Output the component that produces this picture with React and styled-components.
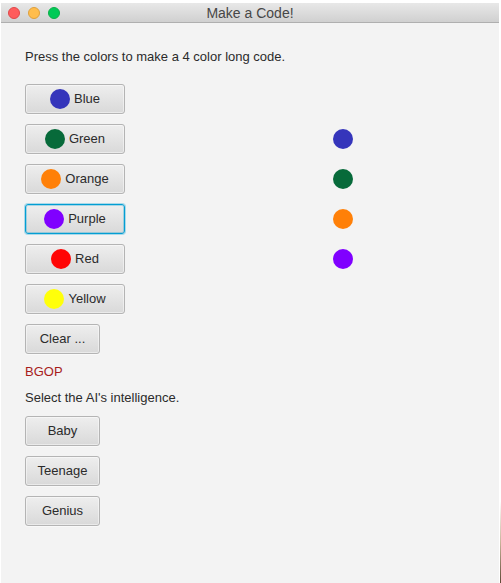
import React, { useState } from "react";
import styled, { createGlobalStyle, css } from "styled-components";

const GlobalStyle = createGlobalStyle`
  *, *::before, *::after { box-sizing: border-box; }
  body {
    margin: 0;
    background: #fff;
    font-family: "Liberation Sans", Arial, Helvetica, sans-serif;
    font-size: 13px;
    line-height: 16px;
    color: #2b2b2b;
  }
`;

const Desktop = styled.div`
  display: flex;
  min-height: 100vh;
  padding: 3px 2px 0 1px;
  background: linear-gradient(#fff 86%, #c9b49a 93%, #5e4a36) right / 1px 100% no-repeat #fff;
`;

const Window = styled.div`
  flex: 1;
  display: flex;
  flex-direction: column;
  background: #f3f3f3;
`;

const TitleBar = styled.header`
  display: grid;
  grid-template-columns: 1fr auto 1fr;
  align-items: center;
  height: 20px;
  padding: 0 7px;
  background: linear-gradient(#e8e8e8, #d0d0d0);
  border-bottom: 1px solid #afafaf;
`;

const Title = styled.h1`
  margin: 0;
  font-size: 14px;
  font-weight: 400;
  color: #474747;
`;

const WindowControls = styled.div`
  display: flex;
  gap: 8px;
`;

const WindowButton = styled.button`
  width: 12px;
  height: 12px;
  padding: 0;
  border: 1px solid ${(p) => p.$edge};
  border-radius: 50%;
  background: ${(p) => p.$fill};
`;

const Form = styled.main`
  display: flex;
  flex-direction: column;
  align-items: stretch;
  gap: 10px;
  padding: 26px 24px;
`;

const Label = styled.p`
  margin: 0;
`;

const CodeText = styled.output`
  color: #a81c1c;
`;

const Picker = styled.div`
  display: grid;
  grid-template-columns: 7fr 10fr;
  grid-auto-rows: 30px;
  row-gap: 10px;
  align-items: center;
  padding-top: 9px;
`;

const Button = styled.button`
  display: flex;
  align-items: center;
  justify-content: center;
  gap: 4px;
  width: ${(p) => (p.$wide ? 100 : 75)}px;
  height: 30px;
  padding: 0;
  border: 1px solid #b4b4b4;
  border-radius: 3px;
  background: linear-gradient(#eeeeee, #d9d9d9);
  box-shadow: inset 0 0 0 1px rgba(255, 255, 255, 0.45), 0 1px 0 #f9f9f9;
  font: inherit;
  color: inherit;
  outline: none;

  ${(p) =>
    p.$wide &&
    css`
      grid-column: 1;
      grid-row: ${p.$row};
    `}

  ${(p) =>
    p.$focused &&
    css`
      border-color: #039ed3;
      box-shadow: inset 0 0 0 1px rgba(3, 158, 211, 0.3), 0 0 0 1px rgba(3, 158, 211, 0.3);
    `}
`;

const Dot = styled.span`
  width: 20px;
  height: 20px;
  border-radius: 50%;
  background: ${(p) => p.$color};
`;

const Peg = styled(Dot)`
  grid-column: 2;
  grid-row: ${(p) => p.$row};
  justify-self: center;
`;

const COLORS = [
  { name: "Blue", value: "#3535bb" },
  { name: "Green", value: "#076a3a" },
  { name: "Orange", value: "#ff8008" },
  { name: "Purple", value: "#8000ff" },
  { name: "Red", value: "#ff0505" },
  { name: "Yellow", value: "#ffff0a" },
];

const LEVELS = ["Baby", "Teenage", "Genius"];
const CODE_LENGTH = 4;

export default function App() {
  const [code, setCode] = useState(COLORS.slice(0, CODE_LENGTH));
  const [focused, setFocused] = useState("Purple");

  const pick = (color) => {
    setFocused(color.name);
    if (code.length < CODE_LENGTH) setCode([...code, color]);
  };

  return (
    <Desktop>
      <GlobalStyle />
      <Window>
        <TitleBar>
          <WindowControls>
            <WindowButton aria-label="Close" $fill="#ff5c5c" $edge="#e0484a" />
            <WindowButton aria-label="Minimize" $fill="#ffbd4c" $edge="#dfa03c" />
            <WindowButton aria-label="Zoom" $fill="#00ca56" $edge="#0cae48" />
          </WindowControls>
          <Title>Make a Code!</Title>
        </TitleBar>
        <Form>
          <Label>Press the colors to make a 4 color long code.</Label>
          <Picker>
            {COLORS.map((color, i) => (
              <Button
                key={color.name}
                type="button"
                $wide
                $row={i + 1}
                $focused={focused === color.name}
                onClick={() => pick(color)}
              >
                <Dot $color={color.value} />
                {color.name}
              </Button>
            ))}
            {code.map((color, i) => (
              <Peg key={i} $color={color.value} $row={i + 2} />
            ))}
          </Picker>
          <Button type="button" onClick={() => setCode([])}>
            Clear ...
          </Button>
          <CodeText>{code.map((color) => color.name[0]).join("")}</CodeText>
          <Label>Select the AI's intelligence.</Label>
          {LEVELS.map((level) => (
            <Button key={level} type="button">
              {level}
            </Button>
          ))}
        </Form>
      </Window>
    </Desktop>
  );
}
